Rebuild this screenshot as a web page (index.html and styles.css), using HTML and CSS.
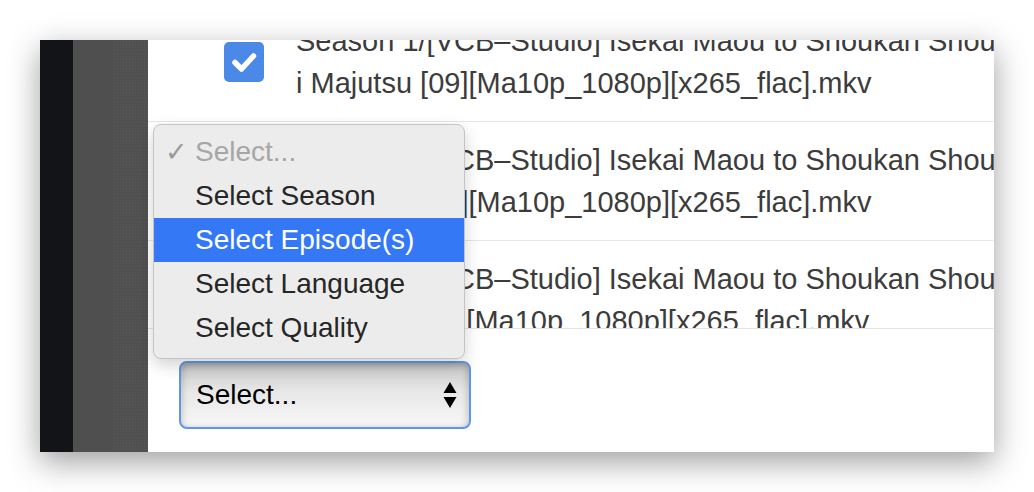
FILE: index.html
```html
<!DOCTYPE html>
<html>
<head>
<meta charset="utf-8">
<link rel="stylesheet" href="styles.css">
</head>
<body>
<div class="window">
  <div class="col col-dark"></div>
  <div class="col col-mid"></div>
  <div class="col col-tex"></div>
  <div class="content">
    <div class="list">
      <div class="list-inner">
        <div class="row">
          <span class="cb"><svg viewBox="0 0 40 40" width="40" height="40"><path d="M11 20.5 L17.5 27 L29.5 14" fill="none" stroke="#fff" stroke-width="5.5" stroke-linecap="round" stroke-linejoin="round"/></svg></span>
          <div class="name"><div class="ln">Season 1/[VCB–Studio] Isekai Maou to Shoukan Shoujo no Dore</div><div class="ln">i Majutsu [09][Ma10p_1080p][x265_flac].mkv</div></div>
        </div>
        <div class="row">
          <span class="cb"><svg viewBox="0 0 40 40" width="40" height="40"><path d="M11 20.5 L17.5 27 L29.5 14" fill="none" stroke="#fff" stroke-width="5.5" stroke-linecap="round" stroke-linejoin="round"/></svg></span>
          <div class="name"><div class="ln">Season 1/[VCB–Studio] Isekai Maou to Shoukan Shoujo no Dore</div><div class="ln">i Majutsu [10][Ma10p_1080p][x265_flac].mkv</div></div>
        </div>
        <div class="row">
          <span class="cb"><svg viewBox="0 0 40 40" width="40" height="40"><path d="M11 20.5 L17.5 27 L29.5 14" fill="none" stroke="#fff" stroke-width="5.5" stroke-linecap="round" stroke-linejoin="round"/></svg></span>
          <div class="name"><div class="ln">Season 1/[VCB–Studio] Isekai Maou to Shoukan Shoujo no Dore</div><div class="ln">i Majutsu [11][Ma10p_1080p][x265_flac].mkv</div></div>
        </div>
      </div>
    </div>
    <div class="footer">
      <div class="select">
        <span class="select-label">Select...</span>
        <svg class="arrows" viewBox="0 0 14 26" width="14" height="26"><path d="M7 0 L13.5 11 L0.5 11 Z M0.5 15 L13.5 15 L7 26 Z" fill="#000"/></svg>
      </div>
    </div>
    <div class="menu">
      <div class="item placeholder"><span class="check">✓</span>Select...</div>
      <div class="item">Select Season</div>
      <div class="item active">Select Episode(s)</div>
      <div class="item">Select Language</div>
      <div class="item">Select Quality</div>
    </div>
  </div>
</div>
</body>
</html>
```
FILE: styles.css
```css
html, body {
  margin: 0;
  padding: 0;
  background: #ffffff;
}
body {
  width: 1034px;
  height: 492px;
  overflow: hidden;
  font-family: "Liberation Sans", Arial, sans-serif;
}
.window {
  margin: 40px 0 0 40px;
  width: 954px;
  height: 412px;
  display: flex;
  box-shadow: 0 10px 30px rgba(0, 0, 0, 0.38);
  background: #fff;
}
.col { height: 100%; }
.col-dark { width: 33px; background: #131418; }
.col-mid { width: 40px; background: #4f4f4f; }
.col-tex {
  width: 35px;
  background: #505050;
  background-image: radial-gradient(rgba(100,100,100,0.45) 0.5px, transparent 0.7px);
  background-size: 3px 3px;
}
.content {
  position: relative;
  width: 846px;
  display: flex;
  flex-direction: column;
  background: #fff;
}
.list {
  height: 288px;
  overflow: hidden;
  border-bottom: 1px solid #e4e4e4;
}
.list-inner {
  margin-top: -37px;
}
.row {
  display: flex;
  align-items: center;
  gap: 32px;
  padding: 17px 0 17px 76px;
  border-bottom: 1px solid #e6e6e6;
}
.cb {
  flex: none;
  width: 40px;
  height: 40px;
  border-radius: 5px;
  background: #4a89e8;
  display: flex;
}
.name {
  flex: 1;
  min-width: 0;
  overflow: hidden;
  color: #3c3c3c;
  font-size: 29px;
  line-height: 42px;
}
.ln { white-space: nowrap; }
.footer {
  flex: 1;
  padding: 32px 0 0 31px;
}
.select {
  box-sizing: border-box;
  width: 292px;
  height: 68px;
  border: 2px solid #5d97e6;
  border-radius: 8px;
  background: linear-gradient(#c6c6c6, #e8e8e8 45%, #f7f7f7);
  box-shadow: inset 0 3px 6px rgba(0,0,0,0.12), inset -4px 0 6px rgba(0,0,0,0.08), inset 4px 0 6px rgba(0,0,0,0.06);
  display: flex;
  align-items: center;
  justify-content: space-between;
  padding: 0 12px 0 15px;
}
.select-label {
  font-size: 28px;
  color: #000;
}
.arrows { display: block; }
.menu {
  position: absolute;
  left: 5px;
  top: 84px;
  width: 312px;
  box-sizing: border-box;
  padding: 5px 0 8px;
  background: #ececec;
  border: 1px solid #c4c4c4;
  border-radius: 8px;
  box-shadow: 0 6px 16px rgba(0,0,0,0.18);
}
.item {
  position: relative;
  height: 44px;
  line-height: 44px;
  padding-left: 41px;
  font-size: 28px;
  color: #262626;
}
.item.placeholder { color: #a6a6a6; }
.check {
  position: absolute;
  left: 11px;
  top: 0;
  font-size: 27px;
  font-weight: bold;
  color: #9a9a9a;
  font-family: "DejaVu Sans", sans-serif;
}
.item.active {
  background: #3478f6;
  color: #fff;
}
```
